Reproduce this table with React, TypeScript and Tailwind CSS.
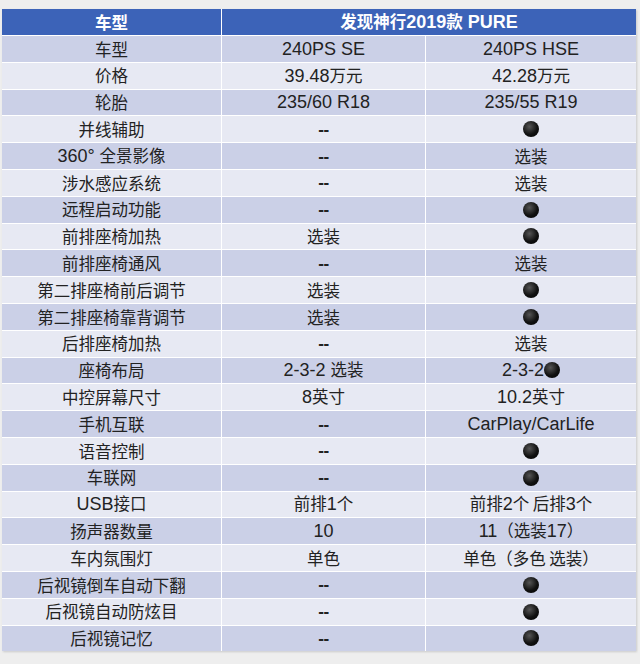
const DOT = "●";

const rows: [string, string, string][] = [
  ["车型", "240PS SE", "240PS HSE"],
  ["价格", "39.48万元", "42.28万元"],
  ["轮胎", "235/60 R18", "235/55 R19"],
  ["并线辅助", "--", DOT],
  ["360° 全景影像", "--", "选装"],
  ["涉水感应系统", "--", "选装"],
  ["远程启动功能", "--", DOT],
  ["前排座椅加热", "选装", DOT],
  ["前排座椅通风", "--", "选装"],
  ["第二排座椅前后调节", "选装", DOT],
  ["第二排座椅靠背调节", "选装", DOT],
  ["后排座椅加热", "--", "选装"],
  ["座椅布局", "2-3-2 选装", "2-3-2" + DOT],
  ["中控屏幕尺寸", "8英寸", "10.2英寸"],
  ["手机互联", "--", "CarPlay/CarLife"],
  ["语音控制", "--", DOT],
  ["车联网", "--", DOT],
  ["USB接口", "前排1个", "前排2个 后排3个"],
  ["扬声器数量", "10", "11（选装17）"],
  ["车内氛围灯", "单色", "单色（多色 选装）"],
  ["后视镜倒车自动下翻", "--", DOT],
  ["后视镜自动防炫目", "--", DOT],
  ["后视镜记忆", "--", DOT],
];

// Latin runs are set a bit larger so they get the width of the original's font
function Mixed({ text }: { text: string }) {
  const parts = text.split(/([A-Za-z0-9./\-° ]+)/).filter((p) => p !== "");
  return (
    <span className="whitespace-pre">
      {parts.map((p, i) =>
        /[A-Za-z0-9]/.test(p) ? (
          <span key={i} className="text-[18px] font-['Liberation_Sans',sans-serif]">
            {p}
          </span>
        ) : (
          <span key={i}>{p}</span>
        )
      )}
    </span>
  );
}

function Dot() {
  return (
    <span className="inline-block w-[16px] h-[16px] rounded-full bg-[radial-gradient(circle_at_40%_35%,#555_0%,#111_55%,#000_100%)] align-middle" />
  );
}

function Value({ text }: { text: string }) {
  if (text === DOT) return <Dot />;
  if (text.endsWith(DOT)) {
    return (
      <span className="flex items-center">
        <Mixed text={text.slice(0, -1)} />
        <Dot />
      </span>
    );
  }
  if (text === "--")
    return <span className="text-[17px] font-bold font-['Liberation_Sans',sans-serif] tracking-[-0.5px]">--</span>;
  return <Mixed text={text} />;
}

export default function App() {
  return (
    <div className="w-[640px] h-[664px] bg-[#eeeeee] pt-[9px] pl-[2px]">
      <div className="w-[634px] grid grid-cols-[219px_203px_210px] gap-px bg-white shadow-[1px_1px_2px_rgba(0,0,0,0.15)] text-[16.5px] text-[#222] font-['Noto_Sans_CJK_SC',sans-serif]">
        <div className="h-[26px] bg-[#3c63b8] text-white font-bold flex items-center justify-center">车型</div>
        <div className="col-span-2 h-[26px] bg-[#3c63b8] text-white font-bold flex items-center justify-center">
          <Mixed text="发现神行2019款 PURE" />
        </div>
        {rows.map((r, i) => {
          const bg = i % 2 === 0 ? "bg-[#cbd0e7]" : "bg-[#e7e9f3]";
          return [0, 1, 2].map((c) => (
            <div key={i + "-" + c} className={`h-[25.8px] ${bg} flex items-center justify-center leading-none`}>
              {c === 0 ? <Mixed text={r[0]} /> : <Value text={r[c]} />}
            </div>
          ));
        })}
      </div>
    </div>
  );
}
